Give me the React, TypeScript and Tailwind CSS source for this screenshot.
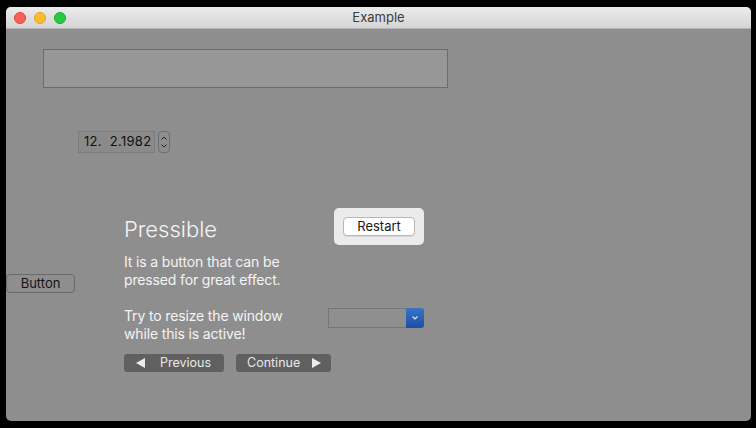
import React from "react";

const font = { fontFamily: "Inter, 'Liberation Sans', sans-serif" };

const TrafficLights: React.FC = () => (
	<div className="flex items-center gap-[8px] pl-[8px]">
		<span className="w-[12px] h-[12px] rounded-full bg-[#fc5f57] border border-[#e0443e]" />
		<span className="w-[12px] h-[12px] rounded-full bg-[#fdbc2e] border border-[#dea123]" />
		<span className="w-[12px] h-[12px] rounded-full bg-[#28c840] border border-[#1aab29]" />
	</div>
);

const Triangle: React.FC<{ dir: "left" | "right" }> = ({ dir }) => (
	<svg width="9" height="10" viewBox="0 0 9 10" fill="#ececec">
		{dir === "left" ? <path d="M0 5 L9 0 L9 10 Z" /> : <path d="M9 5 L0 0 L0 10 Z" />}
	</svg>
);

const App: React.FC = () => {
	return (
		<div className="w-[756px] h-[428px] bg-black pt-[7px] pl-[6px]" style={font}>
			<div className="w-[745px] h-[414px] rounded-[5px] overflow-hidden bg-[#8e8e8e] flex flex-col">
				{/* title bar */}
				<div className="relative h-[22px] flex items-center bg-gradient-to-b from-[#ececec] to-[#d4d4d4] border-b border-[#b4b4b4]">
					<TrafficLights />
					<div className="absolute inset-0 flex items-center justify-center text-[13px] text-[#3c3c3c]">
						Example
					</div>
				</div>

				<div className="flex flex-col">
					{/* text field */}
					<div className="mt-[20px] ml-[37px] w-[405px] h-[39px] bg-[#979797] border border-[#6c6c6c]" />

					{/* date picker */}
					<div className="mt-[43px] ml-[72px] flex items-center gap-[3px]">
						<div className="w-[77px] h-[22px] bg-[#8a8a8a] border border-[#7c7c7c] flex items-center pl-[5px] text-[13px] text-[#111] tracking-[0.3px]">
							12. &nbsp;2.1982
						</div>
						<div className="w-[12px] h-[22px] rounded-[4px] border border-[#6e6e6e] flex flex-col items-center justify-center">
							<svg width="8" height="16" viewBox="0 0 8 16" fill="none" stroke="#222" strokeWidth="1">
								<path d="M1.5 5.5 L4 3 L6.5 5.5" />
								<path d="M1.5 10.5 L4 13 L6.5 10.5" />
							</svg>
						</div>
					</div>

					{/* main row */}
					<div className="mt-[55px] flex items-start">
						<button className="mt-[66px] w-[69px] h-[19px] rounded-[4px] border border-[#6a6a6a] bg-[#8e8e8e] text-[13px] text-[#141414] flex items-center justify-center">
							Button
						</button>

						<div className="ml-[49px] w-[300px] flex flex-col">
							<div className="flex justify-between items-start">
								<div className="mt-[7px] text-[22px] leading-[28px] font-light text-[#f4f4f4]">
									Pressible
								</div>
								<div className="w-[90px] h-[37px] rounded-[5px] bg-[#ebebeb] flex items-center justify-center">
									<button className="w-[72px] h-[19px] rounded-[4px] bg-white border border-[#b8b8b8] text-[13px] text-[#1a1a1a] flex items-center justify-center shadow-[0_1px_0_rgba(0,0,0,0.08)]">
										Restart
									</button>
								</div>
							</div>

							<div className="mt-[8px] text-[14px] leading-[18px] tracking-[-0.15px] text-[#f4f4f4]">
								It is a button that can be
								<br />
								pressed for great effect.
							</div>

							<div className="mt-[18px] flex justify-between items-start">
								<div className="text-[14px] leading-[18px] tracking-[-0.15px] text-[#f4f4f4]">
									Try to resize the window
									<br />
									while this is active!
								</div>
								<div className="mt-[1px] w-[96px] h-[20px] flex">
									<div className="flex-1 bg-[#8f8f8f] border border-[#767676] border-r-0" />
									<div className="w-[18px] rounded-r-[3px] bg-gradient-to-b from-[#3a73c8] to-[#1c4fa2] flex items-center justify-center">
										<svg width="8" height="6" viewBox="0 0 8 6" fill="none" stroke="#d6e2f5" strokeWidth="1.2">
											<path d="M1.5 1.5 L4 4 L6.5 1.5" />
										</svg>
									</div>
								</div>
							</div>

							<div className="mt-[11px] flex gap-[12px]">
								<button className="w-[100px] h-[18px] rounded-[3px] bg-[#606060] text-[12.5px] text-[#e8e8e8] flex items-center">
									<span className="ml-[12px] flex"><Triangle dir="left" /></span>
									<span className="ml-[15px]">Previous</span>
								</button>
								<button className="w-[95px] h-[18px] rounded-[3px] bg-[#606060] text-[12.5px] text-[#e8e8e8] flex items-center">
									<span className="ml-[11px]">Continue</span>
									<span className="ml-[12px] flex"><Triangle dir="right" /></span>
								</button>
							</div>
						</div>
					</div>
				</div>
			</div>
		</div>
	);
};

export default App;
